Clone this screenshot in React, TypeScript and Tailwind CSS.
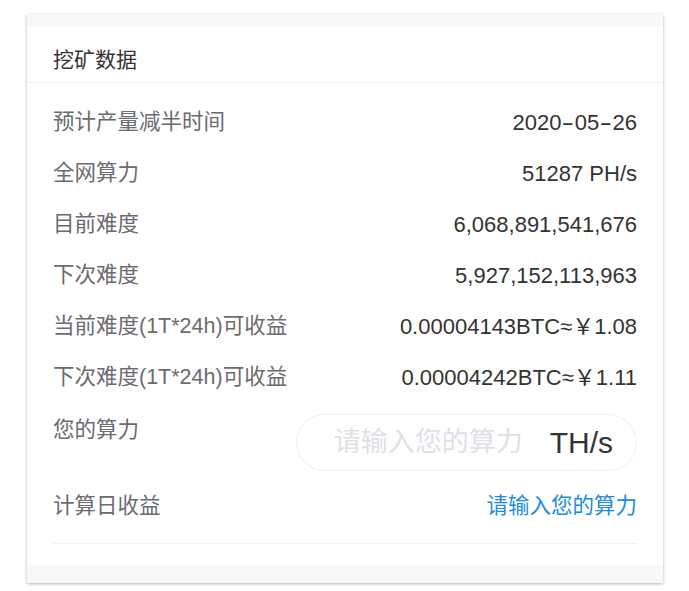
import React from "react";

const Dash = () => <span className="inline-block scale-x-[1.7] mx-[3px]">-</span>;

const rows: [string, React.ReactNode][] = [
  [
    "预计产量减半时间",
    <>
      2020<Dash />05<Dash />26
    </>,
  ],
  ["全网算力", "51287 PH/s"],
  ["目前难度", "6,068,891,541,676"],
  ["下次难度", "5,927,152,113,963"],
  ["当前难度(1T*24h)可收益", "0.00004143BTC≈￥1.08"],
  ["下次难度(1T*24h)可收益", "0.00004242BTC≈￥1.11"],
];

export default function App() {
  return (
    <div
      className="w-[689px] h-[591px] bg-white pt-[14px] pl-[27px]"
      style={{ fontFamily: '"Liberation Sans", "Noto Sans CJK SC", sans-serif' }}
    >
      <div className="w-[636px] bg-white shadow-[0_1px_3px_rgba(0,0,0,0.3)]">
        <div className="h-[12px] bg-[#f7f8fa]" />
        <div className="h-[57px] flex items-start pt-[20px] px-[26px] border-b border-[#f0f1f3] text-[21px] leading-[28px] text-[#333]">
          挖矿数据
        </div>
        <div className="px-[26px] pt-[14px]">
          {rows.map(([k, v], i) => (
            <div key={i} className="h-[51px] flex items-center justify-between">
              <span className="text-[21.5px] text-[#6b6b70]">{k}</span>
              <span className="text-[22px] text-[#333]">{v}</span>
            </div>
          ))}
          <div className="flex items-start justify-between pt-[11px] pb-[10px]">
            <span className="text-[21.5px] leading-[28px] mt-[2px] text-[#6b6b70]">您的算力</span>
            <div className="w-[341px] h-[57px] rounded-full border border-[#eef0f5] flex items-center justify-end pr-[23px]">
              <input
                className="w-[196px] text-[27px] text-[#333] placeholder:text-[#dfe0ea] outline-none bg-transparent"
                placeholder="请输入您的算力"
              />
              <span className="text-[30px] text-[#333] ml-[20px]">TH/s</span>
            </div>
          </div>
          <div className="h-[51px] flex items-center justify-between">
            <span className="text-[21.5px] text-[#6b6b70]">计算日收益</span>
            <span className="text-[21.5px] text-[#1d8de3]">请输入您的算力</span>
          </div>
          <div className="mt-[11px] border-t border-[#f0f1f3]" />
        </div>
        <div className="h-[21px]" />
        <div className="h-[18px] bg-[#f7f8fa]" />
      </div>
    </div>
  );
}
